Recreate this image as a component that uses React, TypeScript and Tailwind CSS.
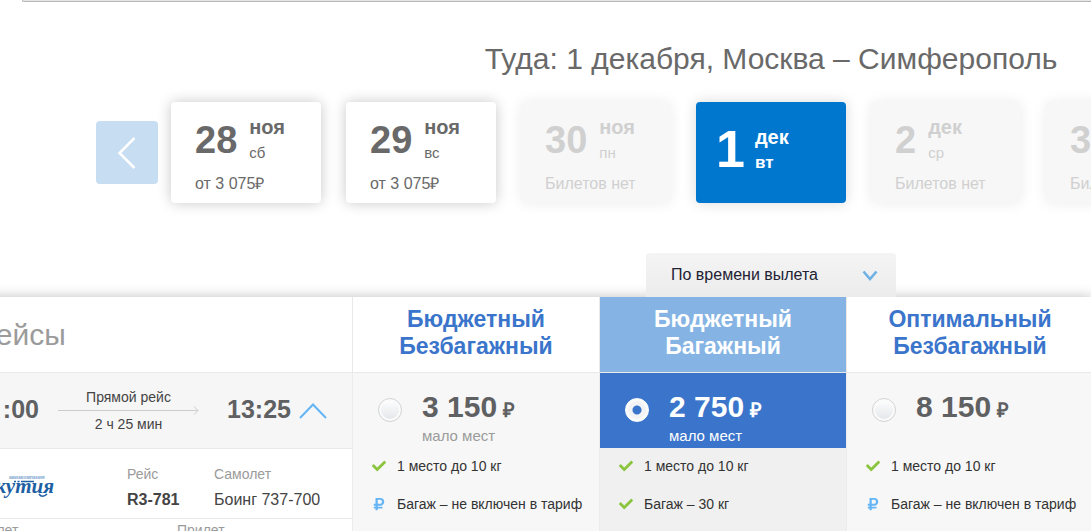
import { useState } from "react";
import clsx from "clsx";
import { FaCheck, FaRubleSign } from "react-icons/fa";

type DateOption = {
  day: string;
  month: string;
  weekday: string;
  price?: string;
};

type Feature = {
  text: string;
  included: boolean;
};

type Fare = {
  id: string;
  name: string[];
  price: string;
  note?: string;
  features: Feature[];
};

const dates: DateOption[] = [
  { day: "28", month: "ноя", weekday: "сб", price: "3 075" },
  { day: "29", month: "ноя", weekday: "вс", price: "3 075" },
  { day: "30", month: "ноя", weekday: "пн" },
  { day: "1", month: "дек", weekday: "вт", price: "2 750" },
  { day: "2", month: "дек", weekday: "ср" },
  { day: "3", month: "дек", weekday: "чт" },
];

const fares: Fare[] = [
  {
    id: "budget",
    name: ["Бюджетный", "Безбагажный"],
    price: "3 150",
    note: "мало мест",
    features: [
      { text: "1 место до 10 кг", included: true },
      { text: "Багаж – не включен в тариф", included: false },
    ],
  },
  {
    id: "budget-baggage",
    name: ["Бюджетный", "Багажный"],
    price: "2 750",
    note: "мало мест",
    features: [
      { text: "1 место до 10 кг", included: true },
      { text: "Багаж – 30 кг", included: true },
    ],
  },
  {
    id: "optimal",
    name: ["Оптимальный", "Безбагажный"],
    price: "8 150",
    features: [
      { text: "1 место до 10 кг", included: true },
      { text: "Багаж – не включен в тариф", included: false },
    ],
  },
];

type DateCardProps = {
  date: DateOption;
  isSelected: boolean;
  onSelect: () => void;
};

function DateCard({ date, isSelected, onSelect }: DateCardProps) {
  const isDisabled = !date.price;

  return (
    <button
      type="button"
      disabled={isDisabled}
      aria-pressed={isSelected}
      onClick={onSelect}
      className={clsx(
        "flex h-[101px] w-[150px] shrink-0 flex-col rounded text-left",
        isSelected && "bg-[#0077cf] px-5 pt-5 text-white shadow-[0_0_14px_rgba(0,0,0,0.15)]",
        !isSelected && "px-6 pt-4",
        !isSelected && !isDisabled && "bg-white text-[#696969] shadow-[0_0_14px_rgba(0,0,0,0.22)]",
        isDisabled && "bg-[#f7f7f7] text-[#d0d0d0] shadow-[0_0_14px_rgba(0,0,0,0.08)]"
      )}
    >
      <span className={clsx("flex", isSelected ? "gap-2.5" : "gap-3")}>
        <span
          className={clsx(
            "font-bold",
            isSelected ? "text-[52px] leading-[54px]" : "text-[38px] leading-[44px]"
          )}
        >
          {date.day}
        </span>
        <span className={clsx("flex flex-col", isSelected && "pt-1.5")}>
          <span className="text-[20px] font-bold leading-[18px]">{date.month}</span>
          <span
            className={clsx(
              "mt-[9px] leading-[16px]",
              isSelected ? "text-[17px] font-bold" : "text-[15px]"
            )}
          >
            {date.weekday}
          </span>
        </span>
      </span>
      {!isSelected && (
        <span className="mt-3 whitespace-nowrap text-[16px] leading-[20px]">
          {isDisabled ? "Билетов нет" : `от ${date.price}₽`}
        </span>
      )}
    </button>
  );
}

function AirlineLogo() {
  return (
    <svg width="78" height="28" viewBox="0 0 78 28" role="img" aria-label="Якутия">
      <text x="32" y="5" fontSize="5" fontWeight="bold" fill="#7fa6cf">
        авиакомпания
      </text>
      <text
        x="77"
        y="19"
        textAnchor="end"
        fontFamily="Liberation Serif, serif"
        fontSize="21"
        fontStyle="italic"
        fontWeight="bold"
        fill="#1e5fa4"
      >
        Якутия
      </text>
      <path d="M44 7.5h13M37 7.5h2M40.500 7.5h2" stroke="#1e5fa4" strokeWidth="1.5" />
      <path d="M62 20c2 3 5 3 8 0" stroke="#1e5fa4" strokeWidth="1.5" fill="none" />
    </svg>
  );
}

type FeatureRowProps = {
  feature: Feature;
};

function FeatureRow({ feature }: FeatureRowProps) {
  return (
    <li className="flex h-[38px] items-center gap-2.5 pb-0.5">
      <span className="flex w-4 justify-center">
        {feature.included ? (
          <FaCheck className="size-3.5 text-[#8bc53f]" />
        ) : (
          <FaRubleSign className="size-3.5 text-[#64b5f6]" />
        )}
      </span>
      <span className="whitespace-nowrap text-[14px] leading-[16px] text-[#333333]">
        {feature.text}
      </span>
    </li>
  );
}

export default function App() {
  const [selectedDate, setSelectedDate] = useState("1");
  const [selectedFare, setSelectedFare] = useState("budget-baggage");

  return (
    <div className="h-screen overflow-hidden bg-white font-['Liberation_Sans',Arial,sans-serif] text-[#696969]">
      <div className="ml-[22px] h-0.5 rounded-bl-sm border-b border-l border-[#b8b8b8] bg-[#e4e4e4]" />

      <h1 className="mt-[37px] whitespace-nowrap pl-[451px] text-center text-[30px] leading-[40px]">
        Туда: 1 декабря, Москва – Симферополь
      </h1>

      <div className="mt-[23px] flex items-center pl-24">
        <button
          type="button"
          aria-label="Предыдущие даты"
          className="mr-[13px] flex h-[63px] w-[62px] shrink-0 items-center justify-center rounded bg-[#c7ddf2]"
        >
          <svg width="20" height="32" viewBox="0 0 20 32" fill="none">
            <path d="M17.500 1L2.500 16l15 15" stroke="#fff" strokeWidth="2.5" />
          </svg>
        </button>
        <div className="flex gap-[25px]">
          {dates.map((date) => (
            <DateCard
              key={date.day}
              date={date}
              isSelected={date.day === selectedDate}
              onSelect={() => setSelectedDate(date.day)}
            />
          ))}
        </div>
      </div>

      <div className="mt-[50px] flex justify-center pl-[451px]">
        <div className="relative z-10 w-[250px]">
          <select
            aria-label="Сортировка"
            className="h-[44px] w-full appearance-none rounded-t bg-linear-to-b from-[#f4f4f4] to-[#ececec] pl-[25px] text-[16px] text-[#222233]"
          >
            <option>По времени вылета</option>
            <option>По времени прилета</option>
            <option>По цене</option>
          </select>
          <svg
            className="pointer-events-none absolute right-[18px] top-[17px]"
            width="16"
            height="12"
            viewBox="0 0 16 12"
            fill="none"
          >
            <path d="M1.500 1.500l6.500 7.500 6.500-7.500" stroke="#6db0e4" strokeWidth="2.6" />
          </svg>
        </div>
      </div>

      <table className="-ml-12 w-[calc(100%+50px)] table-fixed border-separate border-spacing-0 bg-white shadow-[0_0_12px_rgba(0,0,0,0.25)]">
        <colgroup>
          <col className="w-[400px]" />
          <col />
          <col />
          <col />
        </colgroup>
        <thead>
          <tr>
            <th
              scope="col"
              className="h-[76px] border-b border-[#e9e9e9] pl-[25px] text-left text-[30px] font-normal text-[#9b9b9b]"
            >
              Рейсы
            </th>
            {fares.map((fare) => (
              <th
                key={fare.id}
                scope="col"
                className={clsx(
                  "border-b border-l border-[#e9e9e9] pb-1 text-center text-[23px] font-bold leading-[27px]",
                  fare.id === selectedFare ? "bg-[#85b4e4] text-white" : "text-[#3a75cb]"
                )}
              >
                {fare.name[0]}
                <br />
                {fare.name[1]}
              </th>
            ))}
          </tr>
        </thead>
        <tbody className="align-top">
          <tr>
            <td className="h-[75px] bg-[#f6f6f6] p-0 align-middle">
              <div className="flex items-center pl-[19px]">
                <span className="w-[68px] pb-1 text-right text-[25px] font-bold leading-[30px] text-[#5f6062]">
                  :00
                </span>
                <div className="ml-[19px] w-[141px] text-center text-[14px] leading-[16px] text-[#444444]">
                  <div>Прямой рейс</div>
                  <svg className="w-full" height="11" viewBox="0 0 141 11" fill="none">
                    <path d="M0 5.500h140M136 1.500l4 4-4 4" stroke="#cccccc" />
                  </svg>
                  <div>2 ч 25 мин</div>
                </div>
                <span className="ml-7 pb-1 text-[25px] font-bold leading-[30px] text-[#5f6062]">
                  13:25
                </span>
                <button type="button" aria-label="Свернуть" className="ml-2">
                  <svg width="28" height="16" viewBox="0 0 28 16" fill="none">
                    <path d="M1 15L14 1.500 27 15" stroke="#64b5f6" strokeWidth="2" />
                  </svg>
                </button>
              </div>
            </td>
            {fares.map((fare) => {
              const isSelected = fare.id === selectedFare;
              return (
                <td
                  key={fare.id}
                  className={clsx(
                    "h-[75px] border-l border-[#ececec] p-0",
                    isSelected ? "bg-[#3a75cb] text-white" : "bg-[#f7f7f7]"
                  )}
                >
                  <label className="flex pl-[25px] pt-[17px]">
                    <input
                      type="radio"
                      name="fare"
                      value={fare.id}
                      checked={isSelected}
                      onChange={() => setSelectedFare(fare.id)}
                      className="mt-2 size-6 shrink-0 appearance-none rounded-full border border-[#d4d4d4] bg-linear-to-b from-white to-[#e2e5e9] shadow-[inset_0_0_0_2px_#fbfbfb] checked:border-white checked:bg-radial checked:from-[#3a75cb] checked:from-[4px] checked:to-[#f1f3f5] checked:to-[5px]"
                    />
                    <span className="ml-5 flex flex-col">
                      <span
                        className={clsx(
                          "whitespace-nowrap text-[30px] font-bold leading-[34px]",
                          !isSelected && "text-[#5f6062]"
                        )}
                      >
                        {fare.price} <span className="-ml-0.5 text-[20px]">₽</span>
                      </span>
                      {fare.note && (
                        <span
                          className={clsx(
                            "mt-px text-[15px] leading-[16px]",
                            !isSelected && "text-[#9b9b9b]"
                          )}
                        >
                          {fare.note}
                        </span>
                      )}
                    </span>
                  </label>
                </td>
              );
            })}
          </tr>
          <tr>
            <td className="p-0">
              <div className="flex h-[71px] border-y border-[#e9e9e9] pl-[25px] pt-[15px]">
                <div className="w-[150px] pt-2.5">
                  <AirlineLogo />
                </div>
                <dl className="flex">
                  <div className="w-[87px]">
                    <dt className="text-[14px] leading-[20px] text-[#9b9b9b]">Рейс</dt>
                    <dd className="mt-[5px] text-[16px] font-bold leading-[22px] text-[#444444]">
                      R3-781
                    </dd>
                  </div>
                  <div>
                    <dt className="text-[14px] leading-[20px] text-[#9b9b9b]">Самолет</dt>
                    <dd className="mt-[5px] text-[16px] leading-[22px] text-[#444444]">
                      Боинг 737-700
                    </dd>
                  </div>
                </dl>
              </div>
              <div className="flex pl-[25px] pt-[3px] text-[14px] leading-[16px] text-[#9b9b9b]">
                <span className="w-[200px]">Вылет</span>
                <span>Прилет</span>
              </div>
            </td>
            {fares.map((fare) => (
              <td
                key={fare.id}
                className={clsx(
                  "border-l border-[#ececec] py-0 pl-[18px] pr-0",
                  fare.id === selectedFare ? "bg-[#f0f0f0]" : "bg-[#f7f7f7]"
                )}
              >
                <ul>
                  {fare.features.map((feature) => (
                    <FeatureRow key={feature.text} feature={feature} />
                  ))}
                </ul>
              </td>
            ))}
          </tr>
        </tbody>
      </table>
    </div>
  );
}
